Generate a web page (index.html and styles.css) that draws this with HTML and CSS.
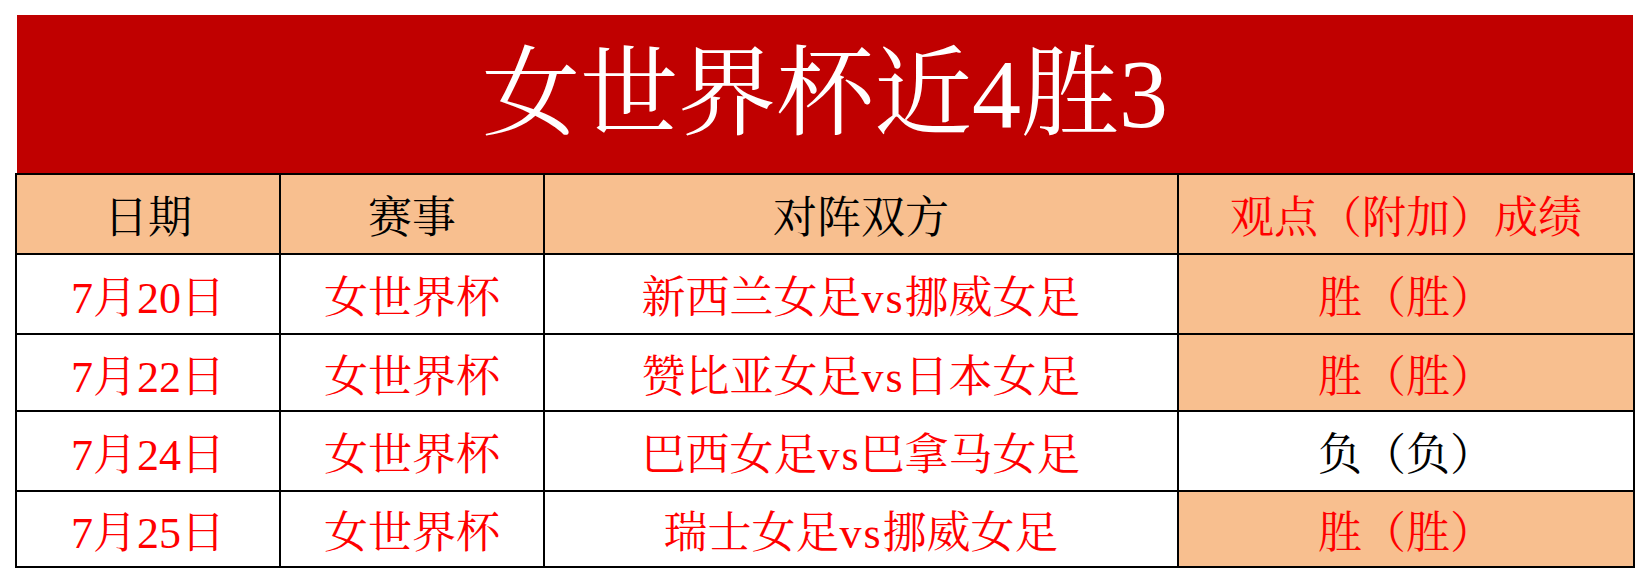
FILE: index.html
```html
<!DOCTYPE html>
<html lang="zh-CN">
<head>
<meta charset="utf-8">
<title>女世界杯近4胜3</title>
<link rel="stylesheet" href="styles.css">
</head>
<body>
<div class="sheet">
  <div class="banner">女世界杯近4胜3</div>
  <table class="grid">
    <colgroup>
      <col class="c-date">
      <col class="c-event">
      <col class="c-match">
      <col class="c-result">
    </colgroup>
    <thead>
      <tr class="r-head">
        <th>日期</th>
        <th>赛事</th>
        <th>对阵双方</th>
        <th class="red">观点（附加）成绩</th>
      </tr>
    </thead>
    <tbody>
      <tr class="r1">
        <td>7月20日</td>
        <td>女世界杯</td>
        <td>新西兰女足<span class="lat">vs</span>挪威女足</td>
        <td class="win">胜（胜）</td>
      </tr>
      <tr class="r2">
        <td>7月22日</td>
        <td>女世界杯</td>
        <td>赞比亚女足<span class="lat">vs</span>日本女足</td>
        <td class="win">胜（胜）</td>
      </tr>
      <tr class="r3">
        <td>7月24日</td>
        <td>女世界杯</td>
        <td>巴西女足<span class="lat">vs</span>巴拿马女足</td>
        <td class="loss">负（负）</td>
      </tr>
      <tr class="r4">
        <td>7月25日</td>
        <td>女世界杯</td>
        <td>瑞士女足<span class="lat">vs</span>挪威女足</td>
        <td class="win">胜（胜）</td>
      </tr>
    </tbody>
  </table>
</div>
</body>
</html>
```

FILE: styles.css
```css
html, body {
  margin: 0;
  padding: 0;
  background: #ffffff;
}

body {
  font-family: "Liberation Serif", "Noto Serif CJK SC", "Noto Sans CJK SC", serif;
}

.sheet {
  padding: 15px 0 0 15px;
  width: 1618px;
}

.banner {
  margin-left: 2px;
  width: 1616px;
  height: 158px;
  background: #c00000;
  color: #ffffff;
  font-size: 98px;
  line-height: 158px;
  text-align: center;
}

.grid {
  border-collapse: collapse;
  table-layout: fixed;
  width: 1618px;
  font-size: 44px;
}

.c-date { width: 264px; }
.c-event { width: 264px; }
.c-match { width: 634px; }
.c-result { width: 456px; }

.grid th,
.grid td {
  border: 2px solid #000000;
  padding: 0;
  text-align: center;
  vertical-align: middle;
  font-weight: normal;
  color: #ff0000;
  white-space: nowrap;
}

.grid th {
  background: #f8bf8f;
  color: #000000;
}

.grid th.red {
  color: #ff0000;
}

.lat {
  letter-spacing: 2px;
}

.r-head { height: 80px; }
.r1 { height: 80px; }
.r2 { height: 77px; }
.r3 { height: 80px; }
.r4 { height: 76px; }

.grid td.win {
  background: #f8bf8f;
  color: #ff0000;
}

.grid td.loss {
  background: #ffffff;
  color: #000000;
}
```
